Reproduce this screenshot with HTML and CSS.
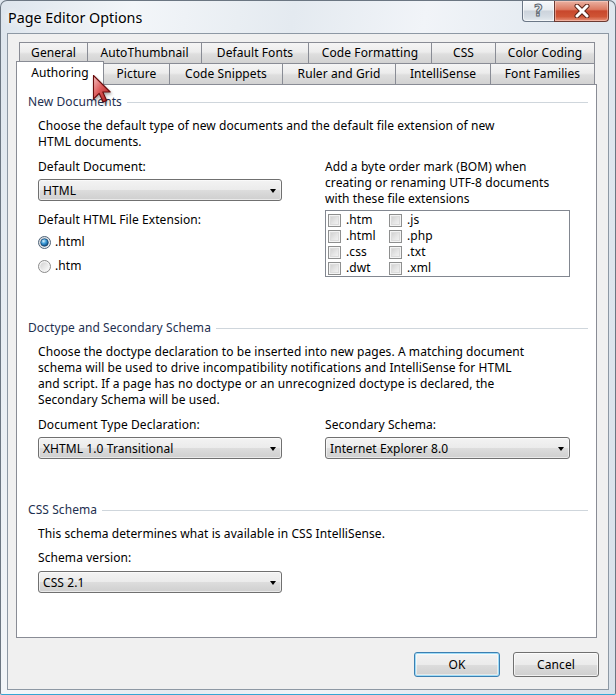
FILE: index.html
```html
<!DOCTYPE html>
<html>
<head>
<meta charset="utf-8">
<title>Page Editor Options</title>
<link rel="stylesheet" href="styles.css">
</head>
<body>
<div class="window">
  <div class="titlebar">
    <div class="title">Page Editor Options</div>
    <div class="caption-buttons">
      <div class="cap help"><span class="help-glyph">?</span></div>
      <div class="cap close">
        <svg width="18" height="14" viewBox="0 0 18 14">
          <path d="M4 2 L14 12 M14 2 L4 12" stroke="#5a2418" stroke-width="5" stroke-linecap="round"/>
          <path d="M4 2 L14 12 M14 2 L4 12" stroke="#ffffff" stroke-width="3" stroke-linecap="round"/>
        </svg>
      </div>
    </div>
  </div>
  <div class="client">
    <div class="tabctl">
      <div class="tabrow back">
        <div class="tab">General</div>
        <div class="tab">AutoThumbnail</div>
        <div class="tab">Default Fonts</div>
        <div class="tab">Code Formatting</div>
        <div class="tab">CSS</div>
        <div class="tab">Color Coding</div>
      </div>
      <div class="tabrow front">
        <div class="tab selected">Authoring</div>
        <div class="tab">Picture</div>
        <div class="tab">Code Snippets</div>
        <div class="tab">Ruler and Grid</div>
        <div class="tab">IntelliSense</div>
        <div class="tab">Font Families</div>
      </div>
      <div class="panel">
        <section class="group">
          <div class="group-head">New Documents</div>
          <div class="group-body">
            <p class="desc">Choose the default type of new documents and the default file extension of new<br>HTML documents.</p>
            <div class="cols">
              <div class="col">
                <div class="label">Default Document:</div>
                <div class="select"><span>HTML</span><i class="arrow"></i></div>
                <div class="label gap-l">Default HTML File Extension:</div>
                <div class="radio first">
                  <svg width="13" height="13" viewBox="0 0 13 13">
                    <defs>
                      <linearGradient id="rbg1" x1="0" y1="0" x2="1" y2="1">
                        <stop offset="0" stop-color="#cfd3d7"/>
                        <stop offset="1" stop-color="#fbfbfb"/>
                      </linearGradient>
                      <radialGradient id="rdot" cx="0.38" cy="0.32" r="0.75">
                        <stop offset="0" stop-color="#d8f1fc"/>
                        <stop offset="0.45" stop-color="#3a9ad8"/>
                        <stop offset="1" stop-color="#0c3f70"/>
                      </radialGradient>
                    </defs>
                    <circle cx="6.5" cy="6.5" r="6" fill="url(#rbg1)" stroke="#4f6479"/>
                    <circle cx="6.5" cy="6.5" r="3.8" fill="url(#rdot)" stroke="#0f3e6a" stroke-width="0.7"/>
                  </svg>
                  <span>.html</span>
                </div>
                <div class="radio second">
                  <svg width="13" height="13" viewBox="0 0 13 13">
                    <defs>
                      <linearGradient id="rbg2" x1="0" y1="0" x2="1" y2="1">
                        <stop offset="0" stop-color="#d2d2d2"/>
                        <stop offset="1" stop-color="#fafafa"/>
                      </linearGradient>
                    </defs>
                    <circle cx="6.5" cy="6.5" r="6" fill="#f4f4f4" stroke="#8b8b8b"/>
                    <circle cx="6.5" cy="6.5" r="4.3" fill="url(#rbg2)"/>
                  </svg>
                  <span>.htm</span>
                </div>
              </div>
              <div class="col">
                <p class="desc2">Add a byte order mark (BOM) when<br>creating or renaming UTF-8 documents<br>with these file extensions</p>
                <div class="listbox">
                  <div class="item"><i class="check"></i><span>.htm</span></div>
                  <div class="item"><i class="check"></i><span>.html</span></div>
                  <div class="item"><i class="check"></i><span>.css</span></div>
                  <div class="item"><i class="check"></i><span>.dwt</span></div>
                  <div class="item"><i class="check"></i><span>.js</span></div>
                  <div class="item"><i class="check"></i><span>.php</span></div>
                  <div class="item"><i class="check"></i><span>.txt</span></div>
                  <div class="item"><i class="check"></i><span>.xml</span></div>
                </div>
              </div>
            </div>
          </div>
        </section>

        <section class="group">
          <div class="group-head">Doctype and Secondary Schema</div>
          <div class="group-body">
            <p class="desc">Choose the doctype declaration to be inserted into new pages. A matching document<br>schema will be used to drive incompatibility notifications and IntelliSense for HTML<br>and script. If a page has no doctype or an unrecognized doctype is declared, the<br>Secondary Schema will be used.</p>
            <div class="cols">
              <div class="col">
                <div class="label">Document Type Declaration:</div>
                <div class="select"><span>XHTML 1.0 Transitional</span><i class="arrow"></i></div>
              </div>
              <div class="col">
                <div class="label">Secondary Schema:</div>
                <div class="select"><span>Internet Explorer 8.0</span><i class="arrow"></i></div>
              </div>
            </div>
          </div>
        </section>

        <section class="group">
          <div class="group-head">CSS Schema</div>
          <div class="group-body">
            <p class="desc">This schema determines what is available in CSS IntelliSense.</p>
            <div class="single">
              <div class="label">Schema version:</div>
              <div class="select narrow"><span>CSS 2.1</span><i class="arrow"></i></div>
            </div>
          </div>
        </section>
      </div>
    </div>
    <div class="buttons">
      <div class="btn default">OK</div>
      <div class="btn">Cancel</div>
    </div>
  </div>
  <svg class="cursor" width="20" height="30" viewBox="0 0 20 30">
    <defs>
      <linearGradient id="cur" x1="0" y1="0" x2="1" y2="1">
        <stop offset="0" stop-color="#f6c4c4"/>
        <stop offset="0.45" stop-color="#dc5a5a"/>
        <stop offset="1" stop-color="#a81818"/>
      </linearGradient>
    </defs>
    <path d="M1.5 1.5 L1.5 25 L7.2 19.4 L11.2 28 L14.6 26.4 L10.8 18 L18.2 18 Z" fill="url(#cur)" stroke="#6a0c0c" stroke-width="1.1" stroke-linejoin="round"/>
  </svg>
</div>
</body>
</html>
```

FILE: styles.css
```css
* { box-sizing: border-box; }
html, body { margin: 0; padding: 0; }
body {
  width: 616px;
  height: 695px;
  overflow: hidden;
  background: #dfe7ef;
  font-family: "Noto Sans", "Segoe UI", "DejaVu Sans", sans-serif;
  font-size: 12px;
  letter-spacing: 0.08px;
  color: #000;
}

.window {
  position: relative;
  width: 616px;
  height: 695px;
  border: 1px solid #6b7682;
  border-bottom: 1px solid #35a6d4;
  border-radius: 7px 7px 2px 2px;
  background: linear-gradient(100deg, #dde5ed 0%, #f3f6f9 18%, #e4eaf0 40%, #f1f4f8 58%, #e2e9f0 78%, #d8e1ea 100%);
  display: flex;
  flex-direction: column;
}

.titlebar {
  height: 32px;
  display: flex;
  justify-content: space-between;
  align-items: flex-start;
}
.title {
  font-size: 14.3px;
  letter-spacing: 0;
  line-height: 20px;
  padding: 7px 0 0 7px;
  color: #000;
  text-shadow: 0 0 6px #fff, 0 0 10px #fff;
}
.caption-buttons {
  display: flex;
  margin-right: 6px;
}
.cap {
  height: 21px;
  display: flex;
  align-items: center;
  justify-content: center;
}
.help {
  width: 32px;
  border: 1px solid #6b7786;
  border-top: none;
  border-right: none;
  border-radius: 0 0 0 4px;
  background: linear-gradient(#f7f9fb 0%, #e8ecf0 45%, #ccd3db 50%, #d6dde4 80%, #e6ebf0 100%);
  box-shadow: inset 0 0 0 1px rgba(255,255,255,0.6);
}
.help-glyph {
  font-family: "DejaVu Sans", sans-serif;
  font-weight: bold;
  font-size: 15px;
  line-height: 15px;
  color: #e9ecef;
  -webkit-text-stroke: 1px #5d6670;
}
.close {
  width: 55px;
  border: 1px solid #6b3a32;
  border-top: none;
  border-radius: 0 0 4px 0;
  background: linear-gradient(#eab2a2 0%, #dc7a62 42%, #c8472c 50%, #cf5435 78%, #e8937b 100%);
  box-shadow: inset 0 0 0 1px rgba(255,220,210,0.45);
}

.client {
  flex: 1;
  margin: 0 6px 4px 6px;
  border: 1px solid #8d98a4;
  background: #f0f0f0;
  display: flex;
  flex-direction: column;
}

.tabctl {
  margin: 8px 11px 0 8px;
}
.tabrow {
  display: flex;
  height: 21px;
  align-items: flex-end;
}
.tabrow.back { padding-left: 3px; }

.tab {
  height: 21px;
  border: 1px solid #898c95;
  border-bottom: none;
  border-left: none;
  background: linear-gradient(#f5f5f5 0%, #ececec 45%, #dedede 55%, #d2d2d2 100%);
  display: flex;
  align-items: center;
  justify-content: center;
  white-space: nowrap;
  line-height: 16px;
}
.tab:first-child { border-left: 1px solid #898c95; }

.back .tab:nth-child(1) { width: 69px; }
.back .tab:nth-child(2) { width: 114px; }
.back .tab:nth-child(3) { width: 107px; }
.back .tab:nth-child(4) { width: 123px; }
.back .tab:nth-child(5) { width: 64px; }
.back .tab:nth-child(6) { width: 99px; }

.front .tab:nth-child(1) { width: 88px; }
.front .tab:nth-child(2) { width: 66px; }
.front .tab:nth-child(3) { width: 113px; }
.front .tab:nth-child(4) { width: 113px; }
.front .tab:nth-child(5) { width: 95px; }
.front .tab:nth-child(6) { width: 104px; }

.tab.selected {
  position: relative;
  z-index: 1;
  height: 24px;
  margin-bottom: -1px;
  background: #fff;
  border-right: 1px solid #898c95;
  padding-bottom: 2px;
}

.panel {
  height: 554px;
  border: 1px solid #898c95;
  background: #fff;
  padding: 9px 8px 0 11px;
}

.group + .group { margin-top: 43px; }
.group-head {
  display: flex;
  align-items: center;
  line-height: 16px;
  color: #1e3050;
}
.group-head::after {
  content: "";
  flex: 1;
  border-top: 1px solid #cfd6dc;
  margin-left: 5px;
}
.group-body {
  padding: 0 18px 0 10px;
}
.desc {
  margin: 8px 0 0;
  line-height: 16px;
  white-space: nowrap;
}
.desc2 {
  margin: 0;
  line-height: 16px;
  white-space: nowrap;
}
.cols {
  display: grid;
  grid-template-columns: 244px 245px;
  column-gap: 43px;
  margin-top: 9px;
}
.single {
  margin-top: 8px;
  width: 244px;
}
.label {
  line-height: 16px;
  white-space: nowrap;
}
.label.gap-l { margin-top: 11px; }

.select {
  margin-top: 4px;
  height: 22px;
  border: 1px solid #707070;
  border-radius: 3px;
  background: linear-gradient(#f3f3f3 0%, #ebebeb 50%, #dddddd 50%, #cfcfcf 100%);
  box-shadow: inset 0 0 0 1px rgba(255,255,255,0.55);
  display: flex;
  align-items: center;
  justify-content: space-between;
  padding: 0 5px 0 4px;
  white-space: nowrap;
}
.single .select { margin-top: 5px; }
.arrow {
  width: 0;
  height: 0;
  border-top: 4px solid #000;
  border-left: 3.5px solid transparent;
  border-right: 3.5px solid transparent;
  margin-top: 1px;
}

.radio {
  display: flex;
  align-items: center;
  gap: 4px;
  height: 16px;
  line-height: 16px;
}
.radio svg { display: block; flex: none; }
.radio.first { margin-top: 6px; }
.radio.second { margin-top: 8px; }

.listbox {
  margin-top: 3px;
  height: 67px;
  border: 1px solid #828790;
  background: #fff;
  padding: 1px 0 0 2px;
  display: grid;
  grid-template-rows: repeat(4, 16px);
  grid-auto-flow: column;
  grid-auto-columns: 61px;
}
.item {
  display: flex;
  align-items: center;
  gap: 5px;
  line-height: 16px;
  white-space: nowrap;
}
.check {
  display: block;
  width: 13px;
  height: 13px;
  border: 1px solid #8e8f8f;
  background: linear-gradient(135deg, #c9c9c9 0%, #e6e6e6 55%, #f7f7f7 100%);
  box-shadow: inset 0 0 0 1px #f4f4f4, inset 0 0 0 2px #dcdcdc;
}

.buttons {
  display: flex;
  justify-content: flex-end;
  gap: 13px;
  margin-top: 14px;
  padding-right: 9px;
}
.btn {
  width: 86px;
  height: 25px;
  border: 1px solid #707070;
  border-radius: 3px;
  background: linear-gradient(#f3f3f3 0%, #ebebeb 50%, #dddddd 50%, #cfcfcf 100%);
  box-shadow: inset 0 0 0 1px rgba(255,255,255,0.7);
  display: flex;
  align-items: center;
  justify-content: center;
}
.btn.default {
  border-color: #3c7fb1;
  box-shadow: inset 0 0 0 1px #9fdcf7, inset 0 0 0 2px rgba(255,255,255,0.5);
}

.cursor {
  position: absolute;
  left: 91px;
  top: 73px;
  z-index: 5;
  filter: drop-shadow(1px 2px 1.5px rgba(0,0,0,0.35));
}
```
